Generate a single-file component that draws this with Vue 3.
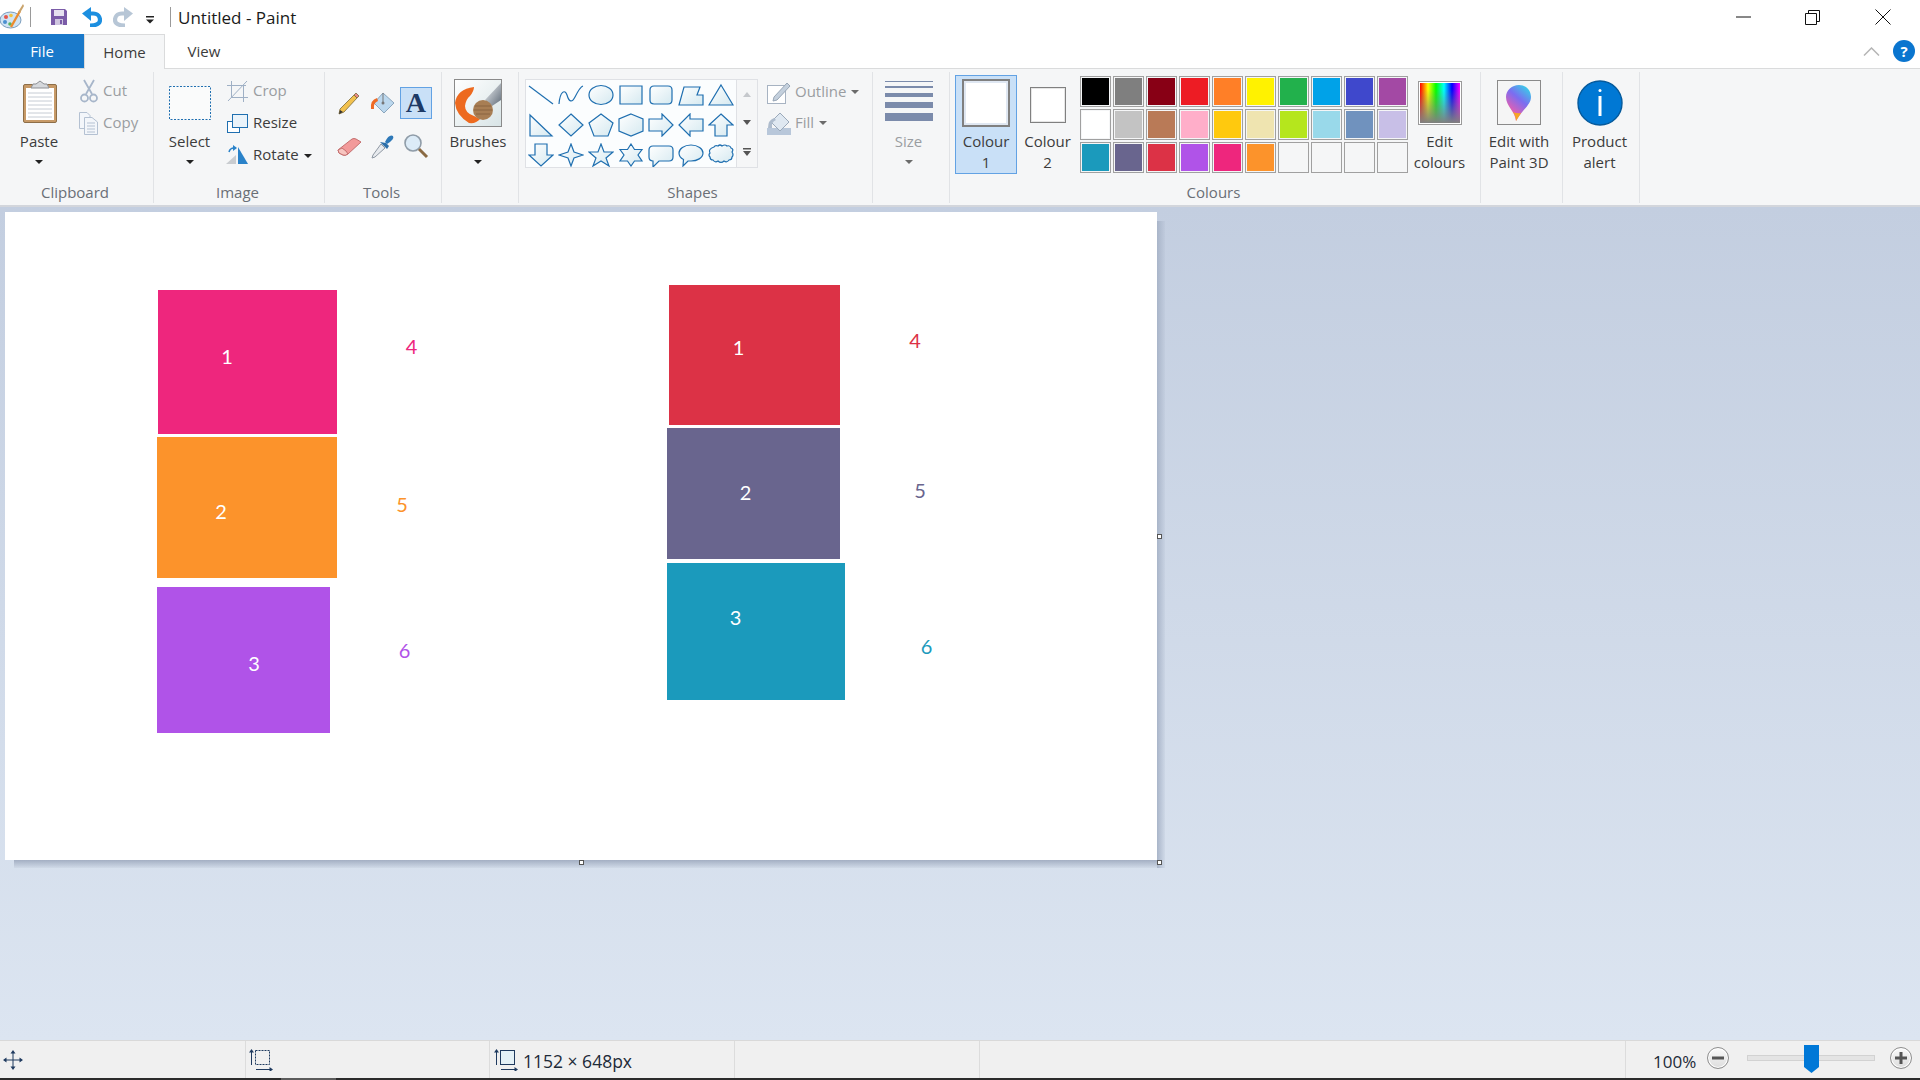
<script setup>
// paleta de la cinta: tres filas de diez
const palette = [
  '#000000', '#7f7f7f', '#880015', '#ed1c24', '#ff7f27', '#fff200', '#22b14c', '#00a2e8', '#3f48cc', '#a349a4',
  '#ffffff', '#c3c3c3', '#b97a57', '#ffaec9', '#ffc90e', '#efe4b0', '#b5e61d', '#99d9ea', '#7092be', '#c8bfe7',
  '#1b9abc', '#69658e', '#dc3246', '#b053e8', '#ee267d', '#fc932b', '', '', '', ''
]

const shapes = [
  'M1 3L25 21',
  'M1 21C2 8 7 6 9 12C11 19 14 20 17 14C20 8 22 4 25 3',
  'M1 12a12 9.5 0 1 0 24 0a12 9.5 0 1 0-24 0Z',
  'M2 3H24V21H2Z',
  'M6 3H20Q24 3 24 7V17Q24 21 20 21H6Q2 21 2 17V7Q2 3 6 3Z',
  'M6 4H22L19 12H25V22H1Z',
  'M13 2L25 22H1Z',
  'M2 2L24 23H2Z',
  'M13 1L25 12L13 23L1 12Z',
  'M13 1L25 10L20 23H6L1 10Z',
  'M13 1L25 6V18L13 23L1 18V6Z',
  'M1 6H14V1L25 12L14 23V18H1Z',
  'M25 6H12V1L1 12L12 23V18H25Z',
  'M13 1L25 12H19V23H7V12H1Z',
  'M7 1H19V12H25L13 23L1 12H7Z',
  'M13 1L16 9L25 12L16 15L13 23L10 15L1 12L10 9Z',
  'M13 1L16 9L25 9L18 15L21 23L13 18L5 23L8 15L1 9L10 9Z',
  'M13 1L16.5 6.5H24L20 12L24 18H16.5L13 23L9.5 18H2L6 12L2 6.5H9.5Z',
  'M5 3H21Q25 3 25 7V14Q25 18 21 18H11L5 24V18Q1 18 1 14V7Q1 3 5 3Z',
  'M13 2C20 2 25 6 25 10C25 15 19 18 13 18L10 18L5 23L5.5 16.5C2.5 15 1 13 1 10C1 6 6 2 13 2Z',
  'M6 4Q7 2 10 3Q12 1 14 3Q17 1 19 3Q22 2 23 5Q26 6 24 9Q26 12 24 14Q24 17 21 17Q19 20 16 18Q13 21 10 18Q7 20 5 17Q2 17 2 14Q0 12 2 10Q0 6 6 4Z'
]

const sizes = [
  { y: 2, h: 1 },
  { y: 7, h: 2 },
  { y: 14, h: 4 },
  { y: 23, h: 6 },
  { y: 34, h: 8 }
]

// rectangulos del dibujo, en coordenadas del lienzo
const blocks = [
  { x: 153, y: 78, w: 179, h: 144, c: '#ee267d' },
  { x: 152, y: 225, w: 180, h: 141, c: '#fc932b' },
  { x: 152, y: 375, w: 173, h: 146, c: '#b053e8' },
  { x: 664, y: 73, w: 171, h: 140, c: '#dc3246' },
  { x: 662, y: 216, w: 173, h: 131, c: '#69658e' },
  { x: 662, y: 351, w: 178, h: 137, c: '#1b9abc' }
]

const numbers = [
  { t: '1', x: 222, y: 144, c: '#fff' },
  { t: '2', x: 216, y: 299, c: '#fff' },
  { t: '3', x: 249, y: 451, c: '#fff' },
  { t: '4', x: 406.5, y: 134, c: '#ee267d' },
  { t: '5', x: 397, y: 292, c: '#fc932b' },
  { t: '6', x: 399.5, y: 438, c: '#b053e8' },
  { t: '1', x: 733.5, y: 135, c: '#fff' },
  { t: '2', x: 740.5, y: 280, c: '#fff' },
  { t: '3', x: 730.5, y: 405, c: '#fff' },
  { t: '4', x: 910, y: 128, c: '#dc3246' },
  { t: '5', x: 915, y: 278, c: '#69658e' },
  { t: '6', x: 921.5, y: 434, c: '#1b9abc' }
]

function blockStyle(b) {
  return { left: b.x + 'px', top: b.y + 'px', width: b.w + 'px', height: b.h + 'px', background: b.c }
}

function numberStyle(n) {
  return { left: n.x + 'px', top: n.y + 'px', color: n.c }
}
</script>

<template>
  <div class="app">
    <!-- barra de titulo -->
    <header class="titlebar">
      <svg class="app-icon" width="25" height="28" viewBox="0 0 25 28">
        <ellipse cx="10.500" cy="17" rx="10.500" ry="8" fill="#cfe3f3" stroke="#7b9dbd" />
        <circle cx="6" cy="14" r="2" fill="#e4574c" />
        <circle cx="11" cy="12.500" r="1.800" fill="#f3c33c" />
        <circle cx="5" cy="19" r="2" fill="#4a8fd0" />
        <circle cx="10" cy="21" r="1.800" fill="#57b35b" />
        <path d="M11 24L20 8" stroke="#ec8b2e" stroke-width="2.400" />
        <path d="M18 9L23 1L24 3L20 10Z" fill="#c9a36b" />
      </svg>
      <span class="tb-sep sep-a"></span>
      <svg class="qa save" width="16" height="16" viewBox="0 0 16 16">
        <path d="M0 0H14L16 2V16H0Z" fill="#7b5ca8" />
        <rect x="3" y="1" width="10" height="6" fill="#e6e1f0" />
        <rect x="4" y="10" width="8" height="6" fill="#cfc6e0" />
        <rect x="9" y="11" width="2" height="4" fill="#7b5ca8" />
      </svg>
      <svg class="qa undo" width="20" height="20" viewBox="0 0 20 20">
        <path d="M6 6.500H11C16 6.500 18 10 18 13C18 16.500 14 18.500 8 18.500" fill="none" stroke="#1c8fe0" stroke-width="4.200" />
        <path d="M0 6.500L9 0V14Z" fill="#1c8fe0" />
      </svg>
      <svg class="qa redo" width="20" height="20" viewBox="0 0 20 20">
        <g transform="translate(20 0) scale(-1 1)">
          <path d="M6 6.500H11C16 6.500 18 10 18 13C18 16.500 14 18.500 8 18.500" fill="none" stroke="#b7c6d6" stroke-width="4.200" />
          <path d="M0 6.500L9 0V14Z" fill="#b7c6d6" />
        </g>
      </svg>
      <svg class="qa drop" width="8" height="8" viewBox="0 0 8 8">
        <rect x="0" y="0" width="8" height="1.500" fill="#222" />
        <path d="M0 3.500H8L4 7.500Z" fill="#222" />
      </svg>
      <span class="tb-sep sep-b"></span>
      <span class="title">Untitled - Paint</span>
      <div class="window-btns">
        <svg width="16" height="16" viewBox="0 0 16 16"><path d="M0 8H15" stroke="#111" /></svg>
        <svg width="16" height="16" viewBox="0 0 16 16" fill="none" stroke="#111">
          <path d="M0.500 4.500H11.500V15.500H0.500Z" />
          <path d="M3.500 4.500V1.500H14.500V12.500H11.500" />
        </svg>
        <svg width="16" height="16" viewBox="0 0 16 16"><path d="M0.500 0.500L15.500 15.500M15.500 0.500L0.500 15.500" stroke="#111" /></svg>
      </div>
    </header>

    <!-- pestanas -->
    <nav class="tabs">
      <div class="tab tab-file">File</div>
      <div class="tab tab-home">Home</div>
      <div class="tab tab-view">View</div>
      <div class="tabs-right">
        <svg width="17" height="9" viewBox="0 0 17 9"><path d="M1 8.500L8.500 1L16 8.500" fill="none" stroke="#b5b5b5" stroke-width="1.500" /></svg>
        <span class="help">?</span>
      </div>
    </nav>

    <!-- cinta -->
    <section class="ribbon">
      <div class="group g-clipboard">
        <div class="group-body">
          <div class="big w78">
            <svg width="48" height="48" viewBox="0 0 48 48">
              <rect x="8.500" y="5.500" width="33" height="38" rx="1.500" fill="#c79a68" stroke="#8d6e48" />
              <rect x="11" y="9" width="28" height="32" fill="#fff" />
              <path d="M13 14H37M13 18H37M13 22H37M13 26H37M13 30H37M13 34H37M13 38H37" stroke="#c6ccd4" />
              <path d="M16 9L18 5H21L25 2L29 5H32L34 9Z" fill="#d5d8dc" stroke="#8c8f94" />
            </svg>
            <span class="lbl">Paste</span>
            <i class="arrow"></i>
          </div>
          <div class="col col-clip">
            <div class="row off">
              <svg width="24" height="24" viewBox="0 0 24 24" fill="none" stroke="#a7b6ca" stroke-width="1.800">
                <path d="M7 1L15 15M17 1L9 15" />
                <circle cx="7.500" cy="19" r="3.500" />
                <circle cx="16.500" cy="19" r="3.500" />
              </svg>
              <span class="rt">Cut</span>
            </div>
            <div class="row off">
              <svg width="24" height="24" viewBox="0 0 24 24" fill="#f3f6fa" stroke="#b4c1d2">
                <path d="M2.500 1.500H10L13 4.500V17.500H2.500Z" />
                <path d="M7.500 6.500H15L20.500 11V23.500H7.500Z" />
                <path d="M10 12H18M10 15H18M10 18H18M10 21H18" />
              </svg>
              <span class="rt">Copy</span>
            </div>
          </div>
        </div>
        <div class="group-label">Clipboard</div>
      </div>

      <div class="group g-image">
        <div class="group-body">
          <div class="big w71">
            <svg width="48" height="48" viewBox="0 0 48 48">
              <rect x="3.500" y="7.500" width="41" height="33" fill="#fff" fill-opacity="0.500" stroke="#1f6fb0" stroke-dasharray="2 1.500" />
            </svg>
            <span class="lbl">Select</span>
            <i class="arrow"></i>
          </div>
          <div class="col">
            <div class="row off">
              <svg width="24" height="24" viewBox="0 0 24 24" fill="none" stroke="#9fb0c5">
                <path d="M2 6.500H21M6.500 2V19M6.500 18.500H23M18.500 6V23M3 22L22 2" />
              </svg>
              <span class="rt after4">Crop</span>
            </div>
            <div class="row">
              <svg width="24" height="24" viewBox="0 0 24 24" stroke="#1f6fb0">
                <rect x="2.500" y="10.500" width="12" height="11" fill="#fff" />
                <rect x="7.500" y="3.500" width="15" height="13" fill="#eaf3fa" />
              </svg>
              <span class="rt after4">Resize</span>
            </div>
            <div class="row">
              <svg width="24" height="24" viewBox="0 0 24 24">
                <path d="M1 21L11 12V21Z" fill="#c9ccd0" />
                <path d="M13 4L23 21H13Z" fill="#2a82c9" />
                <path d="M4 9Q5 5 9 5" fill="none" stroke="#2a82c9" stroke-width="1.500" />
                <path d="M8 2L12 5L8 8Z" fill="#2a82c9" />
              </svg>
              <span class="rt after4">Rotate</span>
              <i class="arrow inline"></i>
            </div>
          </div>
        </div>
        <div class="group-label">Image</div>
      </div>

      <div class="group g-tools">
        <div class="group-body">
          <div class="tools">
            <span class="tool">
              <svg width="26" height="26" viewBox="0 0 26 26">
                <path d="M4 19L18 5L21 8L8 22L3 24Z" fill="#f2c14e" stroke="#7b6a3a" stroke-width="0.800" />
                <path d="M18 5L20 3L23 6L21 8Z" fill="#e98a86" stroke="#7b6a3a" stroke-width="0.800" />
                <path d="M3 24L4 20L7 22Z" fill="#333" />
              </svg>
            </span>
            <span class="tool">
              <svg width="26" height="26" viewBox="0 0 26 26">
                <path d="M14 3L25 13L15 23L5 13Z" fill="#bcd8ee" stroke="#8ba6bd" />
                <path d="M14 3V12" stroke="#777" />
                <circle cx="14" cy="13" r="1.500" fill="#777" />
                <path d="M8 8Q1 10 2 19L5 19Q4 13 9 11Z" fill="#ef6a24" />
              </svg>
            </span>
            <span class="tool tool-on">A</span>
            <span class="tool">
              <svg width="26" height="26" viewBox="0 0 26 26">
                <path d="M2 17L16 6Q18 5 20 6L25 9L12 21Q9 23 7 22L3 20Z" fill="#f29a9a" stroke="#c46f6f" />
                <path d="M2 17L3 20L7 22Q9 23 12 21L10 18L6 15Z" fill="#f7c5c0" stroke="#c46f6f" />
              </svg>
            </span>
            <span class="tool">
              <svg width="26" height="26" viewBox="0 0 26 26">
                <path d="M12 11L4 22L3 25L6 24L16 15Z" fill="#e7eaee" stroke="#8f98a3" />
                <path d="M11 9L18 16L20 13L17 10Z" fill="#2d6fa8" />
                <path d="M16 9Q20 1 24 3Q26 6 18 11Z" fill="#2d78b8" />
              </svg>
            </span>
            <span class="tool">
              <svg width="26" height="26" viewBox="0 0 26 26">
                <circle cx="10" cy="10" r="8" fill="#dcebf7" stroke="#8f9ca8" stroke-width="1.600" />
                <path d="M16 16L24 24" stroke="#8a6a43" stroke-width="3" />
              </svg>
            </span>
          </div>
        </div>
        <div class="group-label">Tools</div>
      </div>

      <div class="group g-brushes">
        <div class="group-body">
          <div class="big w72">
            <svg width="48" height="48" viewBox="0 0 48 48">
              <defs>
                <linearGradient id="brushBg" x1="0" y1="0" x2="1" y2="1">
                  <stop offset="0" stop-color="#ffffff" />
                  <stop offset="1" stop-color="#d8e4e6" />
                </linearGradient>
                <linearGradient id="brushHandle" x1="0" y1="0" x2="1" y2="1">
                  <stop offset="0" stop-color="#f4f6f8" />
                  <stop offset="1" stop-color="#5f6b78" />
                </linearGradient>
              </defs>
              <rect x="0.500" y="0.500" width="47" height="47" fill="url(#brushBg)" stroke="#8a8a8a" />
              <path d="M31 21L47 4V21L38 27Z" fill="url(#brushHandle)" />
              <path d="M20 8Q3 10 1 24Q2 36 15 44Q22 45 26 40L20 37Q11 34 11 27Q12 20 16 17Q20 12 20 8Z" fill="#ed6a1f" />
              <circle cx="29" cy="31" r="10" fill="#a87e54" />
              <path d="M21 27H37M20 31H38M22 35H36" stroke="#8a6440" />
            </svg>
            <span class="lbl">Brushes</span>
            <i class="arrow"></i>
          </div>
        </div>
      </div>

      <div class="group g-shapes">
        <div class="group-body">
          <div class="gallery">
            <svg width="0" height="0" class="defs">
              <defs>
                <linearGradient id="shapeFill" x1="0" y1="0" x2="1" y2="1">
                  <stop offset="0" stop-color="#ffffff" />
                  <stop offset="1" stop-color="#d5e9f0" />
                </linearGradient>
              </defs>
            </svg>
            <span v-for="(d, i) in shapes" :key="i" class="shape">
              <svg width="26" height="24" viewBox="0 0 26 24">
                <path :d="d" :fill="i < 2 ? 'none' : 'url(#shapeFill)'" stroke="#1f6fb0" stroke-width="1.200" />
              </svg>
            </span>
          </div>
          <div class="scroller">
            <svg width="8" height="5" viewBox="0 0 8 5"><path d="M0 5L4 0L8 5Z" fill="#c5c8cc" /></svg>
            <svg width="8" height="5" viewBox="0 0 8 5"><path d="M0 0L4 5L8 0Z" fill="#555" /></svg>
            <svg width="8" height="8" viewBox="0 0 8 8"><path d="M0 0H8V1.500H0ZM0 3H8L4 8Z" fill="#555" /></svg>
          </div>
          <div class="col col-outline">
            <div class="row off">
              <svg width="24" height="24" viewBox="0 0 24 24">
                <rect x="0.500" y="5.500" width="18" height="18" fill="#fff" stroke="#a7b3c2" />
                <path d="M7 17L20 3L23 6L10 20L6 21Z" fill="#c4d0dd" stroke="#98a6b6" />
              </svg>
              <span class="rt after4">Outline</span>
              <i class="arrow inline grey"></i>
            </div>
            <div class="row off">
              <svg width="24" height="24" viewBox="0 0 24 24">
                <rect x="0" y="17" width="24" height="7" fill="#b8c7da" />
                <path d="M13 2L22 11L13 20L4 11Z" fill="#dfe8f1" stroke="#9aa9ba" />
                <path d="M7 7Q1 9 1 17H5Q4 11 9 9Z" fill="#aebccd" />
              </svg>
              <span class="rt after4">Fill</span>
              <i class="arrow inline grey"></i>
            </div>
          </div>
        </div>
        <div class="group-label">Shapes</div>
      </div>

      <div class="group g-size">
        <div class="group-body">
          <div class="big w71 off">
            <svg width="48" height="48" viewBox="0 0 48 48">
              <rect v-for="s in sizes" :key="s.y" x="0" :y="s.y" width="48" :height="s.h" fill="#7b8bab" />
            </svg>
            <span class="lbl">Size</span>
            <i class="arrow grey"></i>
          </div>
        </div>
      </div>

      <div class="group g-colours">
        <div class="group-body">
          <div class="colour colour-on">
            <div class="swatch-a"></div>
            <span class="lbl">Colour</span>
            <span class="lbl">1</span>
          </div>
          <div class="colour">
            <div class="swatch-wrap"><div class="swatch-b"></div></div>
            <span class="lbl">Colour</span>
            <span class="lbl">2</span>
          </div>
          <div class="palette">
            <span v-for="(c, i) in palette" :key="i" class="cell">
              <i :style="{ background: c || 'transparent' }"></i>
            </span>
          </div>
          <div class="big w63">
            <div class="rainbow-wrap"><div class="rainbow"></div></div>
            <span class="lbl">Edit</span>
            <span class="lbl">colours</span>
          </div>
        </div>
        <div class="group-label">Colours</div>
      </div>

      <div class="group g-p3d">
        <div class="group-body">
          <div class="big w76">
            <svg width="48" height="48" viewBox="0 0 48 48">
              <defs>
                <linearGradient id="dropFill" x1="0.800" y1="0" x2="0.200" y2="1">
                  <stop offset="0" stop-color="#36d2e8" />
                  <stop offset="0.400" stop-color="#7b6df0" />
                  <stop offset="0.850" stop-color="#f45da8" />
                </linearGradient>
              </defs>
              <rect x="2.500" y="1.500" width="43" height="44" fill="#f5f5f5" stroke="#8a8a8a" />
              <path d="M24 6C31 6 36 11 36 18C36 26 27 31 21 42C20 32 11 27 11 18C11 11 17 6 24 6Z" fill="url(#dropFill)" />
              <path d="M26 34L21 42C21 39 20 36 18 33Q22 35 26 34Z" fill="#f6a623" />
            </svg>
            <span class="lbl">Edit with</span>
            <span class="lbl">Paint 3D</span>
          </div>
        </div>
      </div>

      <div class="group g-alert">
        <div class="group-body">
          <div class="big w73">
            <svg width="48" height="48" viewBox="0 0 48 48">
              <circle cx="24" cy="24" r="22" fill="#0078d4" stroke="#055a9c" stroke-width="1.400" />
              <circle cx="24" cy="11.500" r="1.500" fill="#fff" />
              <rect x="22.500" y="17" width="3" height="20" fill="#fff" />
            </svg>
            <span class="lbl">Product</span>
            <span class="lbl">alert</span>
          </div>
        </div>
      </div>
    </section>

    <!-- area de trabajo -->
    <main class="workspace">
      <div class="canvas">
        <div v-for="(b, i) in blocks" :key="i" class="block" :style="blockStyle(b)"></div>
        <span v-for="(n, i) in numbers" :key="'n' + i" class="num" :style="numberStyle(n)">{{ n.t }}</span>
        <i class="handle h-right"></i>
        <i class="handle h-bottom"></i>
        <i class="handle h-corner"></i>
      </div>
    </main>

    <!-- barra de estado -->
    <footer class="status">
      <div class="st st-a">
        <svg width="20" height="20" viewBox="0 0 20 20" fill="#1f3a5f">
          <path d="M10 3V17M3 10H17" stroke="#1f3a5f" />
          <path d="M10 0L12.500 3.500H7.500ZM10 20L12.500 16.500H7.500ZM0 10L3.500 7.500V12.500ZM20 10L16.500 7.500V12.500Z" />
        </svg>
      </div>
      <div class="st st-b">
        <svg width="24" height="22" viewBox="0 0 24 22" fill="none" stroke="#1f3a5f">
          <rect x="6.500" y="1.500" width="14" height="14" stroke-dasharray="2 1" />
          <path d="M2.500 16V1M7 20.500H22" />
          <path d="M2.500 0L5 3.500H0ZM24 20.500L20.500 23V18Z" fill="#1f3a5f" stroke="none" />
        </svg>
      </div>
      <div class="st st-c">
        <svg width="24" height="22" viewBox="0 0 24 22" stroke="#1f3a5f">
          <rect x="6.500" y="1.500" width="14" height="14" fill="#e4f1f7" />
          <path d="M2.500 16V1M7 20.500H22" fill="none" />
          <path d="M2.500 0L5 3.500H0ZM24 20.500L20.500 23V18Z" fill="#1f3a5f" stroke="none" />
        </svg>
        <span class="st-text">1152 × 648px</span>
      </div>
      <div class="st st-d"></div>
      <div class="st st-e"></div>
      <div class="st st-zoom">
        <span class="pct">100%</span>
        <span class="zoom-btn">
          <svg width="12" height="12" viewBox="0 0 12 12"><rect x="0" y="4.500" width="12" height="3" fill="#555" /></svg>
        </span>
        <div class="track">
          <svg class="thumb" width="15" height="28" viewBox="0 0 15 28"><path d="M0 0H15V22L7.500 28L0 22Z" fill="#0078d7" /></svg>
        </div>
        <span class="zoom-btn">
          <svg width="12" height="12" viewBox="0 0 12 12"><path d="M0 4.500H4.500V0H7.500V4.500H12V7.500H7.500V12H4.500V7.500H0Z" fill="#555" /></svg>
        </span>
      </div>
    </footer>
    <div class="strip"><i></i></div>
  </div>
</template>

<style>
html, body {
  margin: 0;
  overflow: hidden;
}
</style>

<style scoped>
.app {
  width: 1920px;
  height: 1080px;
  display: flex;
  flex-direction: column;
  overflow: hidden;
  font-family: "Open Sans", "Liberation Sans", sans-serif;
  color: #3c3c3c;
  background: #fff;
}

/* titulo */
.titlebar {
  height: 34px;
  flex: none;
  display: flex;
  align-items: center;
}
.tb-sep {
  width: 1px;
  height: 20px;
  background: #9a9a9a;
}
.sep-a { margin-left: 5px; }
.qa { flex: none; }
.save { margin-left: 20px; }
.undo { margin-left: 15px; }
.redo { margin-left: 11px; }
.drop { margin-left: 13px; margin-top: 6px; }
.sep-b { margin-left: 16px; }
.title {
  margin-left: 7px;
  font-size: 17px;
  color: #1a1a1a;
}
.window-btns {
  margin-left: auto;
  width: 184px;
  display: flex;
  justify-content: space-between;
  padding-right: 29px;
  box-sizing: border-box;
  margin-top: -1px;
}
.window-btns svg:nth-child(2) { margin-left: -2px; }

/* pestanas */
.tabs {
  height: 34px;
  flex: none;
  display: flex;
  position: relative;
  z-index: 1;
  font-size: 15px;
}
.tab {
  display: flex;
  align-items: center;
  justify-content: center;
}
.tab-file {
  width: 84px;
  background: #1979ca;
  color: #fff;
}
.tab-home {
  width: 81px;
  height: 35px;
  box-sizing: border-box;
  background: #f5f6f7;
  border: 1px solid #dadbdc;
  border-bottom: 0;
}
.tab-view {
  width: 78px;
}
.tabs-right {
  margin-left: auto;
  display: flex;
  align-items: center;
  gap: 13px;
  padding-right: 5px;
}
.help {
  width: 22px;
  height: 22px;
  border-radius: 50%;
  background: #0a75cf;
  color: #fff;
  font-weight: 700;
  font-size: 15px;
  line-height: 22px;
  text-align: center;
}

/* cinta */
.ribbon {
  height: 139px;
  flex: none;
  box-sizing: border-box;
  display: flex;
  background: #f5f6f7;
  border-top: 1px solid #dadbdc;
  border-bottom: 2px solid #d3d6dc;
  padding-top: 3px;
  font-size: 15px;
}
.group {
  flex: none;
  height: 131px;
  box-sizing: border-box;
  border-right: 1px solid #e1e3e6;
  display: flex;
  flex-direction: column;
}
.group-body {
  height: 109px;
  box-sizing: border-box;
  padding-top: 3px;
  display: flex;
}
.group-label {
  height: 22px;
  line-height: 23px;
  text-align: center;
  color: #6a6f76;
  padding-right: 3px;
}
.g-clipboard { width: 154px; }
.g-image { width: 171px; }
.g-tools { width: 117px; }
.g-brushes { width: 77px; }
.g-shapes { width: 354px; }
.g-size { width: 77px; }
.g-colours { width: 531px; }
.g-p3d { width: 82px; }
.g-alert { width: 77px; }

.big {
  margin-top: 4px;
  display: flex;
  flex-direction: column;
  align-items: center;
  flex: none;
}
.big > svg { margin-bottom: 5px; }
.w63 { width: 63px; }
.w71 { width: 71px; }
.w72 { width: 72px; }
.w73 { width: 73px; }
.w76 { width: 76px; }
.w78 { width: 78px; }
.lbl {
  line-height: 19px;
  height: 21px;
  white-space: nowrap;
}
.arrow {
  display: block;
  margin-top: 7px;
  width: 0;
  height: 0;
  border-left: 4px solid transparent;
  border-right: 4px solid transparent;
  border-top: 4px solid #222;
}
.arrow.inline { margin: 1px 0 0 3px; }
.arrow.grey { border-top-color: #6b6b6b; }

.col { flex: none; }
.col-clip { margin-left: -1px; }
.row {
  height: 32px;
  display: flex;
  align-items: center;
  gap: 2px;
}
.rt { padding-bottom: 2px; }
.row .after4 { margin-left: 2px; }
.off { color: #9a9da1; }

/* herramientas */
.tools {
  margin: 12px 0 0 7px;
  display: grid;
  grid-template-columns: repeat(3, 33.500px);
  grid-auto-rows: 32px;
  row-gap: 11px;
  justify-items: center;
  align-items: center;
}
.tool {
  display: flex;
  align-items: center;
  justify-content: center;
}
.tool-on {
  width: 32px;
  height: 32px;
  box-sizing: border-box;
  background: #c9e0f7;
  border: 1px solid #62a2e4;
  font-family: "Liberation Serif", serif;
  font-weight: 700;
  font-size: 28px;
  color: #1d3a66;
}

/* formas */
.g-shapes .group-label { padding-right: 6px; }
.gallery {
  margin: 4px 0 0 6px;
  width: 212px;
  height: 89px;
  box-sizing: border-box;
  background: #fbfdfe;
  border: 1px solid #dfe1e5;
  display: grid;
  grid-template-columns: repeat(7, 30px);
  grid-auto-rows: 30px;
  flex: none;
}
.defs { position: absolute; }
.shape {
  display: flex;
  align-items: center;
  justify-content: center;
}
.scroller {
  margin-top: 4px;
  width: 21px;
  height: 89px;
  box-sizing: border-box;
  border: 1px solid #dfe1e5;
  border-left: 0;
  display: flex;
  flex-direction: column;
  align-items: center;
  justify-content: space-around;
  flex: none;
}
.col-outline { margin: 1px 0 0 9px; }
.col-outline .row { height: 31px; }

/* colores */
.colour {
  width: 61px;
  height: 99px;
  box-sizing: border-box;
  display: flex;
  flex-direction: column;
  align-items: center;
  flex: none;
}
.colour-on {
  width: 62px;
  margin-left: 5px;
  background: #c9e0f7;
  border: 1px solid #62a2e4;
  padding-top: 3px;
}
.swatch-a {
  width: 48px;
  height: 48px;
  box-sizing: border-box;
  background: #fff;
  border: 2px solid #808080;
  box-shadow: inset 0 0 0 2px #dfe7f2;
  margin-bottom: 5px;
  flex: none;
}
.swatch-wrap {
  height: 56px;
  flex: none;
  display: flex;
  align-items: center;
  padding-top: 4px;
  box-sizing: border-box;
  margin-bottom: 1px;
}
.swatch-b {
  width: 36px;
  height: 36px;
  box-sizing: border-box;
  background: #fff;
  border: 1px solid #808080;
  box-shadow: inset 0 0 0 1px #e6e6e6;
}
.palette {
  margin: 1px 0 0 2px;
  width: 328px;
  height: 97px;
  display: grid;
  grid-template-columns: repeat(10, 31px);
  grid-auto-rows: 31px;
  gap: 2px;
  flex: none;
}
.cell {
  box-sizing: border-box;
  border: 1px solid #a0a0a0;
  padding: 1px;
  display: block;
}
.cell i {
  display: block;
  width: 100%;
  height: 100%;
}
.rainbow-wrap {
  height: 48px;
  flex: none;
  padding-top: 2px;
  margin-bottom: 5px;
  box-sizing: border-box;
}
.rainbow {
  width: 44px;
  height: 44px;
  box-sizing: border-box;
  border: 2px solid #fff;
  outline: 1px solid #9a9a9a;
  outline-offset: -1px;
  background:
    linear-gradient(to bottom, rgba(128, 128, 128, 0) 15%, rgba(128, 128, 128, 1) 100%),
    linear-gradient(to right, #f00, #ff0, #0f0, #0ff, #00f, #f0f);
}

/* lienzo */
.workspace {
  flex: 1;
  min-height: 0;
  box-sizing: border-box;
  padding: 5px 0 0 5px;
  background: linear-gradient(to bottom, #c3cee0, #dce5f1);
}
.canvas {
  position: relative;
  width: 1152px;
  height: 648px;
  background: #fff;
}
.canvas::before {
  content: "";
  position: absolute;
  left: 100%;
  top: 9px;
  width: 8px;
  height: 647px;
  background: linear-gradient(to right, #a9b5c9, rgba(169, 181, 201, 0.150));
}
.canvas::after {
  content: "";
  position: absolute;
  left: 9px;
  top: 100%;
  width: 1143px;
  height: 8px;
  background: linear-gradient(to bottom, #a4afc3, rgba(169, 181, 201, 0.150));
}
.block { position: absolute; }
.num {
  position: absolute;
  font-family: Lato, "Open Sans", sans-serif;
  font-size: 20px;
  line-height: 1;
  transform: translate(-50%, -50%);
}
.handle {
  position: absolute;
  width: 3px;
  height: 3px;
  background: #fff;
  border: 1px solid #555;
  z-index: 1;
}
.h-right { left: 1152px; top: 322px; }
.h-bottom { left: 574px; top: 648px; }
.h-corner { left: 1152px; top: 648px; }

/* estado */
.status {
  height: 38px;
  flex: none;
  box-sizing: border-box;
  background: #f0f0f0;
  border-top: 1px solid #d9d9d9;
  display: flex;
}
.st {
  box-sizing: border-box;
  height: 100%;
  border-right: 1px solid #dcdcdc;
  display: flex;
  align-items: center;
  flex: none;
}
.st-a { width: 246px; padding-left: 3px; }
.st-b { width: 244px; padding-left: 3px; }
.st-c { width: 245px; padding-left: 4px; gap: 5px; }
.st-d { width: 245px; }
.st-e { width: 646px; }
.st-text {
  font-size: 17.500px;
  color: #1d2a38;
  padding-top: 3px;
}
.st-zoom {
  width: 294px;
  border-right: 0;
  padding-left: 27px;
}
.pct {
  font-size: 17px;
  color: #1d2a38;
  width: 54px;
  padding-top: 3px;
  flex: none;
}
.zoom-btn {
  width: 22px;
  height: 22px;
  box-sizing: border-box;
  border: 1px solid #8e8e8e;
  border-radius: 50%;
  background: linear-gradient(to bottom, #fafafa, #dcdcdc);
  box-shadow: inset 0 0 0 1px #fff;
  display: flex;
  align-items: center;
  justify-content: center;
  flex: none;
  margin-top: -3px;
}
.track {
  position: relative;
  margin: -3px 15px 0 18px;
  width: 128px;
  height: 6px;
  box-sizing: border-box;
  background: #e4e4e4;
  border: 1px solid #d2d2d2;
  flex: none;
}
.thumb {
  position: absolute;
  left: 56px;
  top: -11px;
}
.strip {
  height: 2px;
  flex: none;
  background: #2b2b2b;
  padding-left: 281px;
}
.strip i {
  display: block;
  width: 55px;
  height: 2px;
  background: #5c5c5c;
}
</style>
